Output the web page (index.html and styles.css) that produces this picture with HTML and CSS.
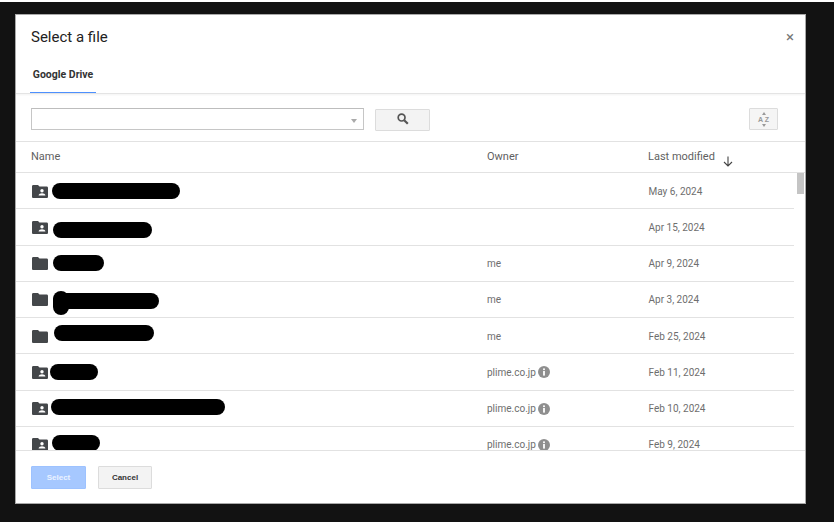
FILE: index.html
```html
<!DOCTYPE html>
<html lang="en">
<head>
<meta charset="utf-8">
<title>Select a file</title>
<link rel="stylesheet" href="styles.css">
</head>
<body>
<svg class="defs" width="0" height="0" aria-hidden="true">
  <symbol id="folder" viewBox="0 0 16 13"><path d="M1.3 0H6l1.5 1.6h7.2c.7 0 1.3.6 1.3 1.3v8.8c0 .7-.6 1.3-1.3 1.3H1.3C.6 13 0 12.4 0 11.7V1.3C0 .6.6 0 1.3 0z" fill="#44474a"/></symbol>
  <symbol id="shared" viewBox="0 0 16 13"><path d="M1.3 0H6l1.5 1.6h7.2c.7 0 1.3.6 1.3 1.3v8.8c0 .7-.6 1.3-1.3 1.3H1.3C.6 13 0 12.4 0 11.7V1.3C0 .6.6 0 1.3 0z" fill="#44474a"/><circle cx="10" cy="5.8" r="1.7" fill="#fff"/><path d="M6.6 10.6c0-1.6 2-2.3 3.4-2.3s3.4.7 3.4 2.3z" fill="#fff"/></symbol>
  <symbol id="info" viewBox="0 0 12 12"><circle cx="6" cy="6" r="6" fill="#8f8f8f"/><rect x="5.1" y="2.4" width="1.8" height="1.7" fill="#fff"/><rect x="5.1" y="5" width="1.8" height="4.6" fill="#fff"/></symbol>
</svg>
<div class="dialog">
  <header class="head">
    <h1 class="title">Select a file</h1>
    <span class="close">×</span>
  </header>
  <nav class="tabs"><span class="tab">Google Drive</span></nav>
  <div class="toolbar">
    <div class="search"><span class="caret"></span></div>
    <button class="btn-search" aria-label="Search">
      <svg width="12" height="12" viewBox="0 0 12 12"><circle cx="4.6" cy="4.6" r="3.4" fill="none" stroke="#555" stroke-width="1.7"/><path d="M7.2 7.2l3.6 3.6" stroke="#555" stroke-width="2.2"/></svg>
    </button>
    <button class="btn-sort" aria-label="Sort">
      <span class="sort-tri up"></span><span class="sort-az">A Z</span><span class="sort-tri down"></span>
    </button>
  </div>
  <div class="cols">
    <span class="c-name">Name</span>
    <span class="c-owner">Owner</span>
    <span class="c-date head-date">Last modified<svg class="arrow" width="10" height="11" viewBox="0 0 10 11"><path d="M5 0.5v9.5M1 6l4 4 4-4" fill="none" stroke="#444" stroke-width="1.1"/></svg></span>
  </div>
  <div class="list">
    <div class="row"><svg class="ic"><use href="#shared"/></svg><span class="c-owner"></span><span class="c-date">May 6, 2024</span></div>
    <div class="row"><svg class="ic"><use href="#shared"/></svg><span class="c-owner"></span><span class="c-date">Apr 15, 2024</span></div>
    <div class="row"><svg class="ic"><use href="#folder"/></svg><span class="c-owner">me</span><span class="c-date">Apr 9, 2024</span></div>
    <div class="row"><svg class="ic"><use href="#folder"/></svg><span class="c-owner">me</span><span class="c-date">Apr 3, 2024</span></div>
    <div class="row"><svg class="ic"><use href="#folder"/></svg><span class="c-owner">me</span><span class="c-date">Feb 25, 2024</span></div>
    <div class="row"><svg class="ic"><use href="#shared"/></svg><span class="c-owner">plime.co.jp<svg class="info"><use href="#info"/></svg></span><span class="c-date">Feb 11, 2024</span></div>
    <div class="row"><svg class="ic"><use href="#shared"/></svg><span class="c-owner">plime.co.jp<svg class="info"><use href="#info"/></svg></span><span class="c-date">Feb 10, 2024</span></div>
    <div class="row"><svg class="ic"><use href="#shared"/></svg><span class="c-owner">plime.co.jp<svg class="info"><use href="#info"/></svg></span><span class="c-date">Feb 9, 2024</span></div>
    <span class="pill p1"></span>
    <span class="pill p2"></span>
    <span class="pill p3"></span>
    <span class="pill p4"></span><span class="pill p4b"></span>
    <span class="pill p5"></span>
    <span class="pill p6"></span>
    <span class="pill p7"></span>
    <span class="pill p8"></span>
    <span class="thumb"></span>
  </div>
  <footer class="foot">
    <button class="btn-select">Select</button>
    <button class="btn-cancel">Cancel</button>
  </footer>
</div>
</body>
</html>
```
FILE: styles.css
```css
* { box-sizing: border-box; }
html, body { margin: 0; height: 100%; }
body {
  width: 834px; height: 522px; overflow: hidden;
  background: #121212;
  border-top: 2px solid #fff;
  padding: 12px 0 0 15px;
  font-family: Roboto, "Liberation Sans", sans-serif;
}
.defs { position: absolute; }
.dialog {
  width: 791px; height: 490px;
  background: #fff;
  border: 1px solid #a9a9a9;
  display: flex; flex-direction: column;
}
.head {
  height: 43px; flex: none;
  display: flex; justify-content: space-between;
  padding: 13px 11px 0 15px;
}
.title { margin: 0; font-size: 15px; font-weight: 400; line-height: 19px; color: #222; }
.close { font-size: 15px; line-height: 18px; color: #777; }
.tabs {
  height: 36px; flex: none;
  padding-left: 14px;
  border-bottom: 1px solid #e4e4e4;
  box-shadow: 0 1px 2px rgba(0,0,0,.05);
}
.tab {
  display: block; width: 66px; height: 35px;
  text-align: center; line-height: 33px;
  font-size: 10.5px; font-weight: 700; color: #333;
  border-bottom: 1px solid #4d90fe;
}
.toolbar {
  height: 48px; flex: none;
  display: flex; align-items: flex-start;
  padding: 14px 27px 0 15px;
  border-bottom: 1px solid #e2e2e2;
}
.search {
  width: 333px; height: 22px;
  border: 1px solid #c6c6c6; border-top-color: #bdbdbd;
  position: relative;
}
.caret {
  position: absolute; right: 6px; top: 10px;
  border: 3px solid transparent; border-top: 4px solid #aaa; border-bottom: 0;
}
.btn-search {
  width: 55px; height: 22px; margin: 1px 0 0 11px; padding: 0 0 3px;
  background: #f3f3f3; border: 1px solid #dcdcdc; border-radius: 1px;
  display: flex; align-items: center; justify-content: center;
}
.btn-sort {
  width: 29px; height: 22px; margin: 0 0 0 auto; padding: 0;
  background: #f5f5f5; border: 1px solid #dcdcdc; border-radius: 1px;
  display: flex; flex-direction: column; align-items: center; justify-content: center; gap: 1px;
}
.sort-tri { width: 0; height: 0; border: 2.5px solid transparent; }
.sort-tri.up { border-top: 0; border-bottom: 3px solid #999; }
.sort-tri.down { border-bottom: 0; border-top: 3px solid #999; }
.sort-az { font-size: 7px; line-height: 7px; color: #999; font-weight: 700; }
.cols {
  height: 31px; flex: none;
  display: flex; align-items: center;
  border-bottom: 1px solid #e2e2e2;
  font-size: 11px; color: #5f5f5f;
  padding-bottom: 2px;
}
.cols .c-name { width: 471px; padding-left: 15px; }
.c-owner { width: 161px; display: flex; align-items: center; gap: 2px; }
.c-date { white-space: nowrap; }
.head-date { display: flex; align-items: center; }
.arrow { margin: 5px 0 -5px 8px; flex: none; }
.list {
  flex: 1; min-height: 0; overflow: hidden;
  position: relative;
}
.row {
  width: 778px; height: 36.25px;
  display: flex; align-items: center;
  border-bottom: 1px solid #e2e2e2;
  padding-top: 1px;
  font-size: 10px; color: #6e6e6e;
}
.ic { width: 16px; height: 13px; margin: 0 439px 0 16px; flex: none; }
.info { width: 12px; height: 12px; flex: none; }
.row .c-date { padding-left: 0.5px; }
.pill { position: absolute; height: 16px; border-radius: 8px; background: #000; }
.p1 { left: 36px; top: 10px; width: 128px; }
.p2 { left: 37px; top: 49px; width: 99px; }
.p3 { left: 37px; top: 82px; width: 51px; }
.p4 { left: 37px; top: 120px; width: 106px; }
.p4b { left: 37px; top: 118px; width: 16px; height: 24px; }
.p5 { left: 38px; top: 152px; width: 100px; }
.p6 { left: 34px; top: 191px; width: 48px; }
.p7 { left: 35px; top: 226px; width: 174px; }
.p8 { left: 36px; top: 262px; width: 48px; }
.thumb { position: absolute; left: 781px; top: 0; width: 7px; height: 21px; background: #c4c4c4; }
.foot {
  height: 53px; flex: none;
  border-top: 1px solid #e2e2e2;
  display: flex; align-items: flex-start; gap: 12px;
  padding: 15px 0 0 15px;
}
.foot button {
  height: 23px; padding: 0; border-radius: 1px;
  font-family: "Liberation Sans", Arial, sans-serif; font-size: 8px; font-weight: 700;
}
.btn-select { width: 55px; background: #a6c8ff; border: 1px solid #9dc2ff; color: #eaf2ff; }
.btn-cancel { width: 54px; background: #f3f3f3; border: 1px solid #dcdcdc; color: #333; }
```
